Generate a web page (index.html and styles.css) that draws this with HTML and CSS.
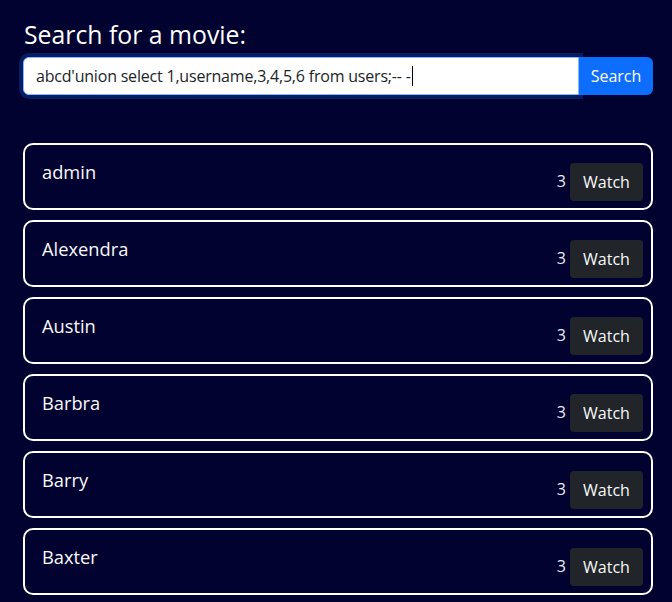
FILE: index.html
```html
<!DOCTYPE html>
<html lang="en">
<head>
<meta charset="utf-8">
<title>Search for a movie</title>
<link rel="stylesheet" href="styles.css">
</head>
<body>
<main class="page">
  <h3 class="title">Search for a movie:</h3>
  <form class="search" onsubmit="return false">
    <div class="field">abcd'union select 1,username,3,4,5,6 from users;-- -<span class="caret"></span></div>
    <button class="search-btn" type="button">Search</button>
  </form>
  <ul class="results">
    <li class="card"><span class="name">admin</span><span class="meta"><span class="num">3</span><button class="watch" type="button">Watch</button></span></li>
    <li class="card"><span class="name">Alexendra</span><span class="meta"><span class="num">3</span><button class="watch" type="button">Watch</button></span></li>
    <li class="card"><span class="name">Austin</span><span class="meta"><span class="num">3</span><button class="watch" type="button">Watch</button></span></li>
    <li class="card"><span class="name">Barbra</span><span class="meta"><span class="num">3</span><button class="watch" type="button">Watch</button></span></li>
    <li class="card"><span class="name">Barry</span><span class="meta"><span class="num">3</span><button class="watch" type="button">Watch</button></span></li>
    <li class="card"><span class="name">Baxter</span><span class="meta"><span class="num">3</span><button class="watch" type="button">Watch</button></span></li>
  </ul>
</main>
</body>
</html>
```
FILE: styles.css
```css
html, body {
  margin: 0;
  padding: 0;
  background: #020230;
  height: 100%;
  overflow: hidden;
}
body {
  font-family: "Open Sans", "Noto Sans", sans-serif;
  color: #f8f9fa;
}
.page {
  padding: 19px 19px 0 23px;
}
.title {
  margin: 0 0 8px 1px;
  font-size: 24.8px;
  line-height: 30px;
  font-weight: 400;
  color: #ffffff;
}
.search {
  display: flex;
  height: 38px;
  margin: 0;
}
.field {
  flex: 1;
  box-sizing: border-box;
  background: #fff;
  border: 1px solid #86b7fe;
  border-radius: 6px 0 0 6px;
  box-shadow: 0 0 0 4px rgba(13, 110, 253, 0.25);
  padding: 0 12px;
  font-size: 16px;
  line-height: 36px;
  letter-spacing: -0.2px;
  color: #212529;
  white-space: nowrap;
  position: relative;
  z-index: 1;
}
.caret {
  display: inline-block;
  width: 1px;
  height: 20px;
  background: #000;
  vertical-align: -4px;
  margin-left: 1px;
}
.search-btn {
  width: 74px;
  border: 0;
  background: #0d6efd;
  color: #fff;
  font: inherit;
  font-size: 16px;
  border-radius: 0 6px 6px 0;
  padding: 0;
}
.results {
  list-style: none;
  margin: 48px 0 0 0;
  padding: 0;
  display: flex;
  flex-direction: column;
  gap: 10px;
}
.card {
  box-sizing: border-box;
  height: 67px;
  border: 2px solid #ffffff;
  border-radius: 10px;
  display: flex;
  justify-content: space-between;
  padding: 0 8px 0 17px;
}
.name {
  margin-top: 15px;
  font-size: 18.3px;
  line-height: 24px;
}
.meta {
  align-self: flex-end;
  margin-bottom: 7px;
  display: flex;
  align-items: center;
  gap: 4px;
}
.num {
  font-size: 16px;
  color: #e9ecef;
  margin-top: -3px;
}
.watch {
  width: 73px;
  height: 38px;
  border: 0;
  border-radius: 4px;
  background: #212529;
  color: #f8f9fa;
  font: inherit;
  font-size: 16px;
  padding: 0;
}
```
